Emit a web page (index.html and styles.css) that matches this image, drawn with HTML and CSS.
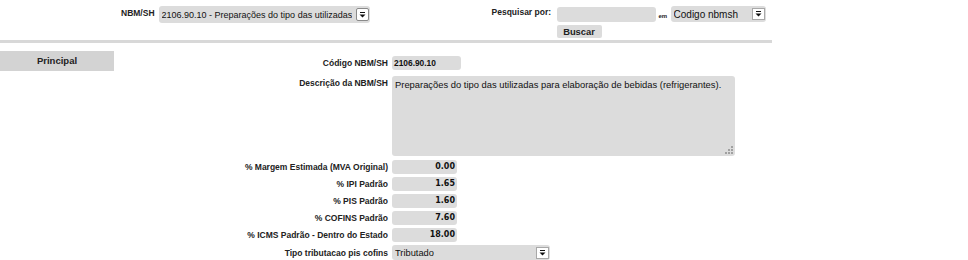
FILE: index.html
```html
<!DOCTYPE html>
<html lang="pt-BR">
<head>
    <meta charset="UTF-8">
    <title>NBM/SH</title>
    <link rel="stylesheet" href="styles.css">
</head>
<body>
    <div class="top">
        <div class="top-left">
            <span class="top-label">NBM/SH</span>
            <div class="select select-nbm">
                <span class="select-text">2106.90.10 - Preparações do tipo das utilizadas</span>
                <span class="arrow"><svg width="9" height="8" viewBox="0 0 9 8"><rect x="2" y="1" width="5" height="1" fill="#111"/><path d="M1.5 3.5h6l-3 3z" fill="#111"/></svg></span>
            </div>
        </div>
        <div class="search">
            <span class="top-label">Pesquisar por:</span>
            <div class="search-fields">
                <div class="search-line">
                    <input type="text" class="search-input">
                    <span class="em">em</span>
                    <div class="select select-campo">
                        <span class="select-text">Codigo nbmsh</span>
                        <span class="arrow"><svg width="9" height="8" viewBox="0 0 9 8"><rect x="2" y="1" width="5" height="1" fill="#111"/><path d="M1.5 3.5h6l-3 3z" fill="#111"/></svg></span>
                    </div>
                </div>
                <button class="btn">Buscar</button>
            </div>
        </div>
    </div>

    <div class="divider"></div>

    <div class="main">
        <div class="tabs">
            <div class="tab">Principal</div>
        </div>

        <div class="form">
            <label class="lbl">Código NBM/SH</label>
            <div class="field field-code">2106.90.10</div>

            <label class="lbl lbl-top">Descrição da NBM/SH</label>
            <div class="area-wrap">
                <div class="field field-area">Preparações do tipo das utilizadas para elaboração de bebidas (refrigerantes).</div>
            </div>

            <label class="lbl">% Margem Estimada (MVA Original)</label>
            <div class="field field-num">0.00</div>

            <label class="lbl">% IPI Padrão</label>
            <div class="field field-num">1.65</div>

            <label class="lbl">% PIS Padrão</label>
            <div class="field field-num">1.60</div>

            <label class="lbl">% COFINS Padrão</label>
            <div class="field field-num">7.60</div>

            <label class="lbl">% ICMS Padrão - Dentro do Estado</label>
            <div class="field field-num">18.00</div>

            <label class="lbl">Tipo tributacao pis cofins</label>
            <div class="select select-tipo">
                <span class="select-text">Tributado</span>
                <span class="arrow"><svg width="9" height="8" viewBox="0 0 9 8"><rect x="2" y="1" width="5" height="1" fill="#111"/><path d="M1.5 3.5h6l-3 3z" fill="#111"/></svg></span>
            </div>
        </div>
    </div>
</body>
</html>
```

FILE: styles.css
```css
/* General */
body {
    margin: 0;
    font-family: "Liberation Sans", Arial, sans-serif;
    color: #222;
    background: #fff;
}

/* Top bar */
.top {
    display: flex;
    height: 40px;
    padding-left: 121px;
}

.top-left {
    display: flex;
    align-items: flex-start;
}

.top-label {
    font-size: 8.5px;
    font-weight: bold;
    line-height: 10px;
    padding-top: 8px;
    margin-right: 4px;
}

.search {
    display: flex;
    align-items: flex-start;
    margin-left: 122px;
}

.search .top-label {
    width: 61px;
    padding-top: 7px;
}

.search-fields {
    display: flex;
    flex-direction: column;
    align-items: flex-start;
}

.search-line {
    display: flex;
    align-items: center;
    margin-top: 6px;
}

.search-input {
    width: 99px;
    height: 15px;
    box-sizing: border-box;
    border: none;
    border-radius: 3px;
    background: #dcdcdc;
    padding: 0 3px;
}

.em {
    font-size: 6px;
    font-weight: bold;
    margin: 3px 2px 0 3px;
    width: 10px;
}

.btn {
    margin-top: 3px;
    width: 45px;
    height: 13px;
    padding: 0;
    border: none;
    border-radius: 2px;
    background: #dcdcdc;
    color: #222;
    font-family: "Liberation Sans", Arial, sans-serif;
    font-size: 9.4px;
    font-weight: bold;
    line-height: 13px;
}

/* Custom select boxes */
.select {
    display: flex;
    align-items: center;
    justify-content: space-between;
    box-sizing: border-box;
    background: #dcdcdc;
    border-radius: 3px;
    padding: 0 1px 0 3px;
    font-size: 9.3px;
    color: #111;
}

.select-text {
    white-space: nowrap;
    overflow: hidden;
}

.select-nbm {
    width: 211px;
    height: 17px;
    margin-top: 6px;
    font-size: 9px;
}

.select-campo {
    width: 95px;
    height: 16px;
    font-size: 10px;
}

.select-tipo {
    width: 158px;
    height: 15px;
}

.arrow {
    display: flex;
    align-items: center;
    justify-content: center;
    flex-shrink: 0;
    width: 13px;
    height: 13px;
    box-sizing: border-box;
    background: #fff;
    border: 1px solid #8a8a8a;
    border-radius: 2px;
}

.select-tipo .arrow,
.select-campo .arrow {
    width: 13px;
    height: 12px;
    border-color: #a8a8a8;
    border-radius: 0;
}

/* Divider */
.divider {
    width: 772px;
    height: 3px;
    background: #d8d8d8;
}

/* Main area */
.main {
    display: flex;
    align-items: flex-start;
}

.tabs {
    width: 114px;
    flex-shrink: 0;
    padding-top: 8px;
}

.tab {
    height: 20px;
    line-height: 20px;
    background: #d3d3d3;
    text-align: center;
    font-size: 9.5px;
    font-weight: bold;
}

.form {
    display: grid;
    grid-template-columns: 274px auto;
    column-gap: 4px;
    row-gap: 3px;
    padding-top: 13px;
    align-items: center;
    justify-items: start;
}

.lbl {
    justify-self: end;
    font-size: 8.5px;
    font-weight: bold;
    line-height: 14px;
    white-space: nowrap;
}

.lbl-top {
    align-self: start;
    margin-top: 3px;
}

.field {
    box-sizing: border-box;
    background: #dcdcdc;
    border-radius: 3px;
    height: 14px;
    padding: 0 3px;
    color: #111;
}

.field-code {
    width: 69px;
    font-size: 8.4px;
    font-weight: bold;
    line-height: 14px;
    padding-left: 2px;
}

.area-wrap {
    position: relative;
    margin-top: 3px;
    margin-bottom: 1px;
}

.field-area {
    width: 343px;
    height: 80px;
    padding: 3px;
    font-size: 9.4px;
    line-height: 11px;
}

/* resize grip */
.area-wrap::after {
    content: "";
    position: absolute;
    right: 2px;
    bottom: 2px;
    width: 2px;
    height: 2px;
    background: #a0a0a0;
    box-shadow: -3px 0 #a0a0a0, -6px 0 #a0a0a0, 0 -3px #a0a0a0, -3px -3px #a0a0a0, 0 -6px #a0a0a0;
}

.field-num {
    width: 65px;
    text-align: right;
    font-family: "DejaVu Sans", Verdana, sans-serif;
    font-size: 8px;
    font-weight: bold;
    line-height: 14px;
    padding-right: 2px;
}
```
